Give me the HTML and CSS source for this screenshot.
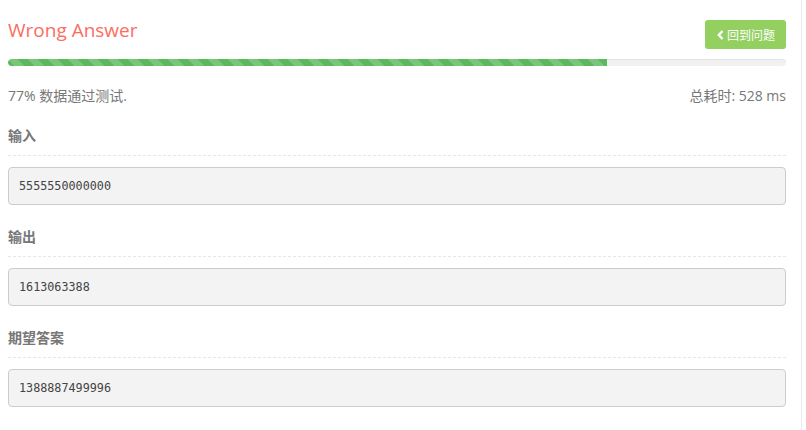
FILE: index.html
```html
<!DOCTYPE html>
<html lang="zh-CN">

<head>
    <meta charset="UTF-8">
    <meta name="viewport" content="width=device-width, initial-scale=1.0">
    <title>评测结果</title>
    <link rel="stylesheet" href="styles.css">
</head>

<body>
    <div class="panel">
        <div class="header">
            <div class="title">Wrong Answer</div>
            <a class="btn_back" href="#">
                <svg class="chevron" width="7" height="10" viewBox="0 0 7 10">
                    <polyline points="5.5,1 1.8,5 5.5,9" fill="none" stroke="#fff" stroke-width="2.4" />
                </svg>回到问题</a>
        </div>

        <div class="progress">
            <div class="progress_bar" style="width:77%"></div>
        </div>

        <div class="stats">
            <span>77% 数据通过测试.</span>
            <span>总耗时: 528 ms</span>
        </div>

        <!-- ------------------------------------------------------------ -->
        <div class="section">
            <div class="section_title">输入</div>
            <pre class="data">5555550000000</pre>
        </div>

        <div class="section">
            <div class="section_title">输出</div>
            <pre class="data">1613063388</pre>
        </div>

        <div class="section">
            <div class="section_title">期望答案</div>
            <pre class="data">1388887499996</pre>
        </div>
    </div>
</body>

</html>
```

FILE: styles.css
```css
body {
    margin: 0;
    font-family: "Open Sans", "Noto Sans CJK SC", sans-serif;
    color: #777;
}

.panel {
    width: 778px;
    min-height: 430px;
    padding: 0 15px 0 8px;
    border-right: 1px solid #ececec;
}

.header {
    display: flex;
    justify-content: space-between;
    align-items: flex-start;
    padding-top: 20px;
}

.title {
    font-size: 19px;
    line-height: 20px;
    color: #fa6e61;
}

.btn_back {
    display: flex;
    align-items: center;
    gap: 3px;
    height: 29px;
    padding: 0 11px 0 12px;
    background-color: #93d05f;
    border-radius: 3px;
    color: #fff;
    font-size: 12px;
    text-decoration: none;
}

.progress {
    height: 7px;
    margin-top: 10px;
    background-color: #f1f1f1;
    border-radius: 4px;
    box-shadow: inset 0 1px 1px rgba(0, 0, 0, 0.06);
    overflow: hidden;
}

.progress_bar {
    height: 100%;
    background-color: #5cb85c;
    background-image: linear-gradient(45deg, rgba(255,255,255,.18) 25%, transparent 25%, transparent 50%, rgba(255,255,255,.18) 50%, rgba(255,255,255,.18) 75%, transparent 75%, transparent);
    background-size: 20px 20px;
    border-radius: 4px 0 0 4px;
}

.stats {
    display: flex;
    justify-content: space-between;
    margin-top: 20px;
    font-size: 14px;
    line-height: 20px;
}

.section {
    margin-top: 20px;
}

.section + .section {
    margin-top: 22px;
}

.section_title {
    font-size: 14px;
    font-weight: bold;
    line-height: 20px;
    padding-bottom: 9px;
    border-bottom: 1px dashed #e6e6e6;
    margin-bottom: 11px;
}

.data {
    margin: 0;
    height: 36px;
    padding: 0 10px;
    line-height: 36px;
    font-family: "DejaVu Sans Mono", monospace;
    font-size: 11.75px;
    color: #444;
    background-color: #f3f3f3;
    border: 1px solid #ccc;
    border-radius: 4px;
}
```
